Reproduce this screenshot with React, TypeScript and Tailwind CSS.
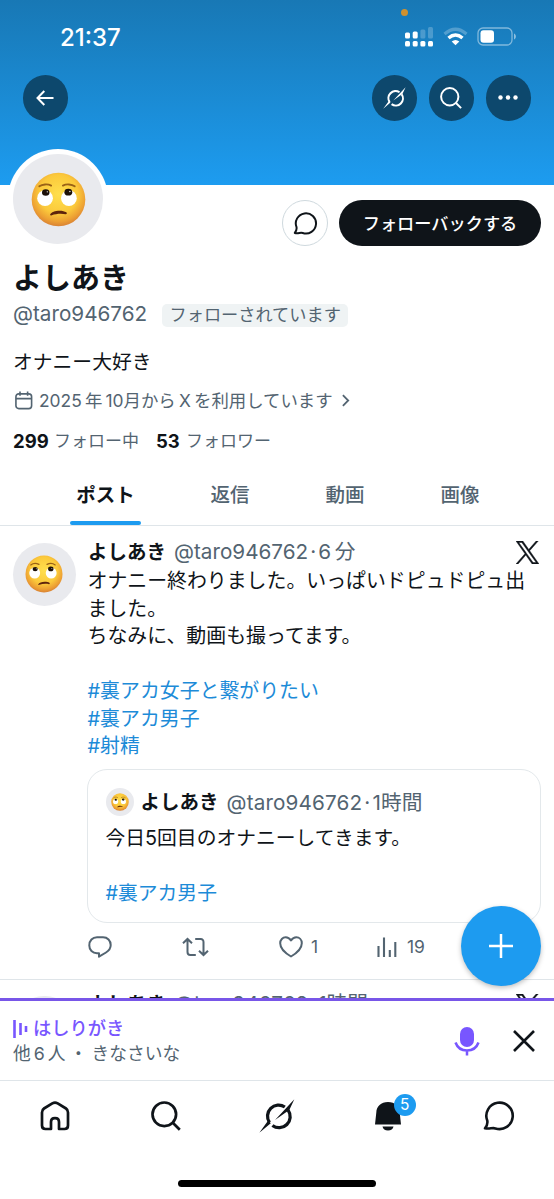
import { clsx } from "clsx";

const tabs = [
  { label: "ポスト", active: true, width: "w-[71px]" },
  { label: "返信", active: false, width: "ml-[67px] w-[44px]" },
  { label: "動画", active: false, width: "ml-[71px] w-[44px]" },
  { label: "画像", active: false, width: "ml-[71px] w-[44px]" },
];

function Emoji({ className }: { className: string }) {
  return (
    <svg viewBox="0 0 56 56" className={className}>
      <defs>
        <radialGradient id="face" cx="0.5" cy="0.4" r="0.6">
          <stop offset="0" stopColor="#ffdf4d" />
          <stop offset="0.6" stopColor="#fbc93b" />
          <stop offset="0.85" stopColor="#eda033" />
          <stop offset="1" stopColor="#d98234" />
        </radialGradient>
      </defs>
      <circle cx="28" cy="28" r="27.3" fill="url(#face)" />
      <circle cx="14.3" cy="26.6" r="8" fill="#fff" />
      <circle cx="38.6" cy="26.6" r="8" fill="#fff" />
      <ellipse cx="15" cy="20.8" rx="3.8" ry="3.3" fill="#1c1008" />
      <ellipse cx="38" cy="20.5" rx="4" ry="3.4" fill="#1c1008" />
      <circle cx="16.6" cy="20.2" r="0.7" fill="#fff" />
      <circle cx="39.6" cy="19.8" r="0.7" fill="#fff" />
      <path d="M8.5 14.6c3-2.2 8.5-2.6 12-.8M32.5 13.8c3.500-1.800 9-1.400 12 .8" fill="none" stroke="#9a6216" strokeWidth="1.9" strokeLinecap="round" />
      <path d="M19.5 43.3c1.5-4.3 12.5-5 16.5-2.3.9.8.6 2-.6 2-4.500-1-10-.6-14.200 1-1.200.5-2 .1-1.700-.7z" fill="#5e240c" />
    </svg>
  );
}

function GrokIcon({ className }: { className: string }) {
  return (
    <svg viewBox="0 0 110 104" className={className} fill="none">
      <path d="M79 24.500A34 34 0 0 0 32 72" stroke="currentColor" strokeWidth="10" />
      <path d="M89 34A34 34 0 0 1 41 81" stroke="currentColor" strokeWidth="10" />
      <path d="M108 1 49 64 86 38 93 33zM1 103 28 66 36 74z" fill="currentColor" />
    </svg>
  );
}

function SearchIcon({ className }: { className: string }) {
  return (
    <svg viewBox="0 0 30 30" className={className} fill="none" stroke="currentColor" strokeWidth="2.7">
      <circle cx="13.3" cy="13.3" r="11.8" />
      <path d="m21.800 21.800 7 7" />
    </svg>
  );
}

function ChatIcon({ className }: { className: string }) {
  return (
    <svg viewBox="0 0 32 30" className={className} fill="none" stroke="currentColor" strokeWidth="2.6" strokeLinejoin="round">
      <path d="M4.300 19.800A13.200 13.200 0 1 1 12.400 27.400C9.500 26.400 6.500 28.300 2 27.300 3.700 25.300 4.800 23 4.300 19.800z" />
    </svg>
  );
}

function XLogo({ className }: { className: string }) {
  return (
    <svg viewBox="0 0 24 24" className={className} fill="currentColor" stroke="currentColor" strokeWidth=".5">
      <path d="M14.258 10.152 23.176 0h-2.113l-7.747 8.813L7.133 0H0l9.352 13.328L0 23.973h2.113l8.176-9.309 6.531 9.309h7.133zm-2.895 3.293-.949-1.328L2.875 1.560h3.246l6.086 8.523.945 1.328 7.910 11.078h-3.246z" />
    </svg>
  );
}

function Handle({ time, className }: { time: string; className?: string }) {
  return (
    <span className={clsx("text-[20.7px] text-[#536471]", className)}>
      @taro946762<span className="mx-[2px]">·</span>
      {time}
    </span>
  );
}

function StatusBar() {
  return (
    <div className="relative flex h-[75px] items-start justify-between pl-[60px] pr-[37px] text-white">
      <span className="absolute left-[401px] top-[9px] size-[7px] rounded-full bg-[#cf912f]" />
      <span className="mt-[24px] text-[24px] font-medium leading-[27px]">21:37</span>
      <svg viewBox="0 0 112 22" className="mt-[26px] h-[22px] w-[112px]" fill="#fff">
        <rect x="0" y="6.5" width="5" height="6" rx="1.5" />
        <rect x="7.7" y="5.5" width="5" height="7" rx="1.5" />
        <rect x="15.4" y="3.5" width="5" height="9" rx="1.5" opacity=".22" />
        <rect x="23" y="1" width="5" height="11.5" rx="1.5" opacity=".22" />
        <rect x="0" y="15" width="5" height="5.5" rx="1.5" />
        <rect x="7.7" y="15" width="5" height="5.5" rx="1.5" />
        <rect x="15.4" y="15" width="5" height="5.5" rx="1.5" />
        <rect x="23" y="15" width="5" height="5.5" rx="1.5" />
        <path d="M39.500 8Q50.500-1.500 61.500 8" fill="none" stroke="#fff" strokeWidth="3.2" opacity=".25" />
        <path d="M43.500 12Q50.500 6 57.500 12" fill="none" stroke="#fff" strokeWidth="3.4" />
        <path d="M46.700 15.500q3.800-3 7.600 0l-3.800 3.800z" />
        <rect x="73" y="2" width="34" height="17" rx="5" fill="none" stroke="#fff" strokeWidth="1.3" opacity=".45" />
        <rect x="75.5" y="4.3" width="13.5" height="12.5" rx="3" />
        <path d="M109 7.500c2.500 1 2.500 5 0 6z" opacity=".5" />
      </svg>
    </div>
  );
}

function ProfileHeader() {
  return (
    <header className="h-[185px] shrink-0 bg-linear-to-b from-[#1878b5] to-[#1d9cf0]">
      <StatusBar />
      <div className="flex items-center gap-[11.500px] pl-[22.500px] pr-[23px] text-white">
        <button className="mr-auto grid size-[45.500px] place-items-center rounded-full bg-[#0d486d]" aria-label="戻る">
          <svg viewBox="0 0 18 16" className="h-[16px] w-[18px]" fill="none" stroke="currentColor" strokeWidth="2">
            <path d="M17.500 8H1.500M8.300 1 1.500 8l6.800 7" />
          </svg>
        </button>
        <button className="grid size-[45.500px] place-items-center rounded-full bg-[#0d486d]" aria-label="Grok">
          <GrokIcon className="h-[22px] w-[23px]" />
        </button>
        <button className="grid size-[45.500px] place-items-center rounded-full bg-[#0d486d]" aria-label="検索">
          <SearchIcon className="size-[22px]" />
        </button>
        <button className="grid size-[45.500px] place-items-center rounded-full bg-[#0d486d]" aria-label="その他">
          <svg viewBox="0 0 20 5" className="h-[5px] w-[20px]" fill="currentColor">
            <circle cx="2.5" cy="2.5" r="2.2" />
            <circle cx="10" cy="2.5" r="2.2" />
            <circle cx="17.5" cy="2.5" r="2.2" />
          </svg>
        </button>
      </div>
    </header>
  );
}

function ProfileInfo() {
  return (
    <section className="shrink-0 whitespace-nowrap px-[13px]">
      <div className="flex h-[75px] items-start">
        <div className="-ml-[5px] -mt-[36px] grid size-[100px] place-items-center rounded-full bg-white">
          <div className="grid size-[90px] place-items-center rounded-full bg-[#e9eaee]">
            <Emoji className="size-[55px]" />
          </div>
        </div>
        <button className="ml-auto mt-[15px] grid size-[46px] place-items-center rounded-full border-[1.500px] border-[#cfd9de]" aria-label="メッセージ">
          <ChatIcon className="h-[23px] w-[25px] text-[#0f1419]" />
        </button>
        <button className="ml-[11px] mt-[15px] h-[46px] w-[202px] rounded-full bg-[#0f1419] pt-[2px] text-[17.200px] font-medium text-white">
          フォローバックする
        </button>
      </div>
      <h1 className="mt-px text-[29px] font-bold leading-[36px]">よしあき</h1>
      <div className="mt-[4px] flex h-[26px] items-center text-[#536471]">
        <span className="w-[149px] text-[20.700px]">@taro946762</span>
        <span className="mt-[3px] h-[23px] rounded-[5px] bg-[#eff3f4] px-[7.500px] text-[17.200px] leading-[22px]">
          フォローされています
        </span>
      </div>
      <p className="mt-[21px] text-[19.800px] leading-[28px]">オナニー大好き</p>
      <div className="mt-[13px] flex h-[24px] items-center text-[17.400px] text-[#536471]">
        <svg viewBox="0 0 20 20" className="-mt-[2px] ml-px h-[19px] w-[20px]" fill="none" stroke="currentColor" strokeWidth="1.7">
          <rect x="1.5" y="3" width="16.5" height="15.5" rx="3" />
          <path d="M1.500 8H18M5.800.500V5M13.800.500V5" />
        </svg>
        <span className="ml-[5px] w-[294px] [word-spacing:-1.700px]">2025 年 10月から X を利用しています</span>
        <svg viewBox="0 0 9 14" className="-mt-[2px] ml-[9px] h-[13px] w-[8px]" fill="none" stroke="currentColor" strokeWidth="2">
          <path d="m1 1 6 6-6 6" />
        </svg>
      </div>
      <div className="mt-[17px] flex h-[24px] items-center text-[17px] text-[#536471]">
        <b className="w-[36px] text-[18.500px] text-[#0f1419]">299</b>
        <span className="ml-[5px]">フォロー中</span>
        <b className="ml-[17px] w-[25px] text-[18.500px] text-[#0f1419]">53</b>
        <span className="ml-[5px]">フォロワー</span>
      </div>
    </section>
  );
}

function ProfileTabs() {
  return (
    <nav className="flex h-[72px] shrink-0 border-b border-[#dfe5e9] pl-[70px]">
      {tabs.map((tab) => (
        <div key={tab.label} className={clsx("flex flex-col items-center whitespace-nowrap", tab.width)}>
          <span
            className={clsx(
              "mt-[27px] text-[19.500px] leading-[28px]",
              tab.active ? "font-bold text-[#0f1419]" : "font-medium text-[#536471]",
            )}
          >
            {tab.label}
          </span>
          {tab.active ? <span className="mt-[12px] h-[4px] w-full rounded-full bg-[#1d9bf0]" /> : null}
        </div>
      ))}
    </nav>
  );
}

function QuotedPost() {
  return (
    <div className="mt-[8px] h-[154px] rounded-[20px] border border-[#e3e8eb] px-[17.500px] pt-[18px]">
      <div className="flex h-[28px] items-center">
        <span className="grid size-[28px] place-items-center rounded-full bg-[#e9eaee]">
          <Emoji className="size-[18px]" />
        </span>
        <b className="ml-[7px] mt-[2px] text-[19.500px]">よしあき</b>
        <Handle time="1時間" className="ml-[8px] mt-[2px] tracking-[.15px]" />
      </div>
      <p className="mt-[9px] text-[19.800px] leading-[27.500px]">今日5回目のオナニーしてきます。</p>
      <p className="mt-[27.500px] text-[19.800px] leading-[27.500px] text-[#1d8bd8]">#裏アカ男子</p>
    </div>
  );
}

function PostActions() {
  return (
    <div className="flex h-[56px] items-center pb-[7px] text-[17.500px] text-[#536471]">
      <svg viewBox="0 0 24 22" className="ml-px h-[22px] w-[24px]" fill="none" stroke="currentColor" strokeWidth="2" strokeLinejoin="round">
        <path d="M9 1.300h6c4.500 0 7.700 3.200 7.700 7.700 0 3.300-1.800 5.700-4.700 7.500L11 20.700v-3.500H9C4.500 17.200 1.300 14 1.300 9.400 1.300 4.500 4.500 1.300 9 1.300z" />
      </svg>
      <svg viewBox="0 0 27 20" className="ml-[70px] h-[20px] w-[27px]" fill="none" stroke="currentColor" strokeWidth="2">
        <path d="M1 6.300 5.500 2l4.500 4.300M5.500 2v13c0 1.800 1 3 2.800 3h5.500M26 13.700 21.500 18 17 13.700M21.500 18V5c0-1.800-1-3-2.800-3h-5.500" />
      </svg>
      <svg viewBox="0 0 24 22" className="ml-[70px] h-[22px] w-[24px]" fill="none" stroke="currentColor" strokeWidth="2" strokeLinejoin="round">
        <path d="M12 4.500C10.500 2.300 8.700 1.300 6.700 1.300 3.700 1.300 1.200 3.700 1.200 7.300c0 5.200 4.800 9.700 10.800 13.200 6-3.500 10.800-8 10.800-13.200 0-3.600-2.500-6-5.500-6-2 0-3.800 1-5.300 3.200z" />
      </svg>
      <span className="ml-[8px] w-[8px]">1</span>
      <svg viewBox="0 0 20 20" className="ml-[58px] h-[20px] w-[20px]" fill="none" stroke="currentColor" strokeWidth="2.1">
        <path d="M1.500 20V9M7 20V.500M12.800 20v-7M18.300 20V5" />
      </svg>
      <span className="ml-[10px]">19</span>
    </div>
  );
}

function Post() {
  return (
    <article className="flex border-b border-[#dfe5e9] pl-[13px] pr-[13px] pt-[12px]">
      <span className="mt-[5px] grid size-[62.500px] shrink-0 place-items-center rounded-full bg-[#e9eaee]">
        <Emoji className="size-[38px]" />
      </span>
      <div className="ml-[11.500px] min-w-0 flex-1 whitespace-nowrap">
        <div className="flex h-[30px] items-start">
          <b className="ml-px text-[19.500px] leading-[28px]">よしあき</b>
          <Handle time="6 分" className="ml-[8px] leading-[28px] [word-spacing:-2px]" />
          <XLogo className="ml-auto mr-[2px] mt-[3px] size-[23px]" />
        </div>
        <div className="pl-[.5px]">
          <p className="text-[19.900px] leading-[27.500px]">
            オナニー終わりました。いっぱいドピュドピュ出
            <br />
            ました。
            <br />
            ちなみに、動画も撮ってます。
          </p>
          <p className="mt-[27.500px] text-[19.900px] leading-[27.500px] text-[#1d8bd8]">
            #裏アカ女子と繋がりたい
            <br />
            #裏アカ男子
            <br />
            #射精
          </p>
        </div>
        <QuotedPost />
        <PostActions />
      </div>
    </article>
  );
}

function NextPost() {
  return (
    <article className="flex pl-[13px] pr-[13px] pt-[10px]">
      <span className="mt-[6px] size-[62.500px] shrink-0 rounded-full bg-[#e9eaee]" />
      <div className="ml-[11.500px] flex h-[30px] flex-1 items-start whitespace-nowrap">
        <b className="ml-px text-[19.500px] leading-[28px]">よしあき</b>
        <Handle time="1時間" className="ml-[8px] leading-[27px]" />
        <XLogo className="ml-auto mr-[2px] mt-[4px] size-[23px]" />
      </div>
    </article>
  );
}

function SpaceBar() {
  return (
    <aside className="flex h-[82px] shrink-0 items-center border-t-[3px] border-[#7856e8] bg-white pl-[13px] pr-[19px]">
      <div className="mr-auto whitespace-nowrap">
        <div className="flex h-[26px] items-center text-[#7856ff]">
          <svg viewBox="0 0 15 18" className="h-[18px] w-[15px]" fill="none" stroke="currentColor" strokeWidth="2.6">
            <path d="M1.500 0v18M7.500 3v12M13 6v6" />
          </svg>
          <span className="ml-[5px] text-[18.300px] font-medium">はしりがき</span>
        </div>
        <p className="text-[17.800px] leading-[24px] text-[#536471] [word-spacing:-2px]">
          他 6 人<span className="mx-[4px]">・</span>きなさいな
        </p>
      </div>
      <svg viewBox="0 0 26 30" className="mr-[33px] h-[30px] w-[26px] text-[#7856ff]" fill="none" stroke="currentColor" strokeWidth="2.5">
        <rect x="6" y="1" width="14" height="20" rx="7" fill="currentColor" stroke="none" />
        <path d="M1.500 16.500c1.800 5 6 8 11.500 8s9.700-3 11.500-8M13 24.500v5" />
      </svg>
      <svg viewBox="0 0 22 22" className="size-[22px] text-[#0f1419]" fill="none" stroke="currentColor" strokeWidth="2.6">
        <path d="m1 1 20 20M21 1 1 21" />
      </svg>
    </aside>
  );
}

function BottomNav() {
  return (
    <footer className="shrink-0 border-t border-[#dfe5e9] bg-white">
      <div className="grid h-[69px] grid-cols-5 place-items-center text-[#0f1419]">
        <svg viewBox="0 0 30 30" className="h-[30px] w-[30px]" fill="none" stroke="currentColor" strokeWidth="2.7" strokeLinejoin="round">
          <path d="M12.300 2.400Q15 1 17.700 2.400L26 7.500Q28 8.800 28 11.500V24.500Q28 28 24.500 28H19V21Q19 17.200 15 17.200T11 21V28H5.500Q2 28 2 24.500V11.500Q2 8.800 4 7.500z" />
        </svg>
        <SearchIcon className="size-[30px]" />
        <GrokIcon className="h-[34px] w-[36px]" />
        <div className="relative">
          <svg viewBox="0 0 26 30" className="h-[30px] w-[26px]" fill="currentColor">
            <path d="M13 1C6 1 1.500 5.500 1.300 11.500L0 23.500h26L24.700 11.500C24.500 5.500 20 1 13 1zM7.500 25.500h11c-.5 2.500-2.500 4-5.500 4s-5-1.500-5.500-4z" />
          </svg>
          <span className="absolute -top-[7px] left-[19px] grid size-[22px] place-items-center rounded-full bg-[#1d9bf0] text-[15.500px] leading-none text-white">
            5
          </span>
        </div>
        <ChatIcon className="h-[30px] w-[32px]" />
      </div>
      <div className="flex h-[49px] justify-center pt-[30px]">
        <span className="h-[7px] w-[198px] rounded-full bg-black" />
      </div>
    </footer>
  );
}

export default function App() {
  return (
    <div className="relative flex h-[1199px] w-[554px] flex-col overflow-hidden bg-white font-['Inter','Noto_Sans_CJK_JP',sans-serif] text-[#0f1419]">
      <ProfileHeader />
      <ProfileInfo />
      <ProfileTabs />
      <main className="min-h-0 flex-1 overflow-hidden">
        <Post />
        <NextPost />
      </main>
      <SpaceBar />
      <BottomNav />
      <button
        className="absolute left-[461px] top-[906px] grid size-[80px] place-items-center rounded-full bg-[#1d9bf0] text-white shadow-[0_2px_5px_rgba(0,0,0,0.25)]"
        aria-label="ポストする"
      >
        <svg viewBox="0 0 24 24" className="size-[24px]" fill="none" stroke="currentColor" strokeWidth="2.5">
          <path d="M12 0v24M0 12h24" />
        </svg>
      </button>
    </div>
  );
}
